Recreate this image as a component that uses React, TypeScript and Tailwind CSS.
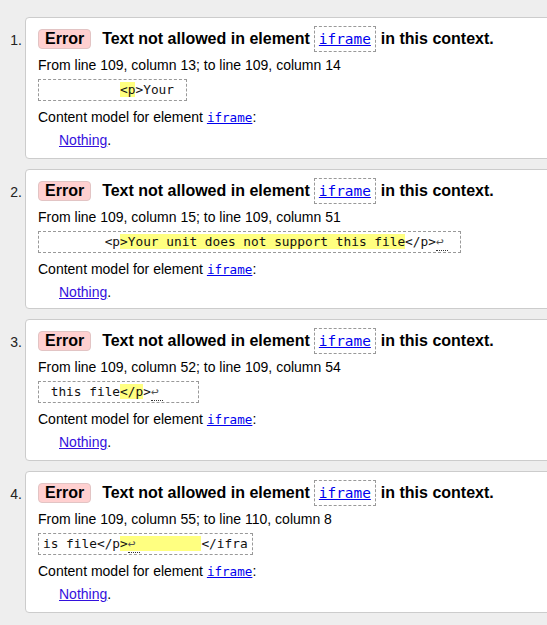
import React from 'react';

type Seg = { text: string; mark?: boolean; ret?: boolean };

interface Item {
  from: string;
  code: Seg[];
  h: string;
}

const items: Item[] = [
  {
    from: 'From line 109, column 13; to line 109, column 14',
    code: [{ text: '          ' }, { text: '<p', mark: true }, { text: '>Your ' }],
    h: 'h-[142px]',
  },
  {
    from: 'From line 109, column 15; to line 109, column 51',
    code: [
      { text: '        <p' },
      { text: '>Your unit does not support this file', mark: true },
      { text: '</p>' },
      { text: '↩', ret: true },
      { text: ' ' },
    ],
    h: 'h-[140px]',
  },
  {
    from: 'From line 109, column 52; to line 109, column 54',
    code: [
      { text: ' this file' },
      { text: '</p', mark: true },
      { text: '>' },
      { text: '↩', ret: true },
      { text: '    ' },
    ],
    h: 'h-[142px]',
  },
  {
    from: 'From line 109, column 55; to line 110, column 8',
    code: [
      { text: 'is file</p' },
      { text: '>', mark: true },
      { text: '↩', mark: true, ret: true },
      { text: '        ', mark: true },
      { text: '</ifra' },
    ],
    h: 'h-[142px]',
  },
];

const mono = { fontFamily: '"DejaVu Sans Mono", "Liberation Mono", monospace' };

function CodeLine({ segs }: { segs: Seg[] }) {
  return (
    <div className="mt-[5px] flex">
      <div
        className="h-[22px] border border-dashed border-[#999] px-[4px] text-[12.8px] leading-[20px] whitespace-pre text-[#111]"
        style={mono}
      >
        {segs.map((s, i) => (
          <span key={i} className={s.mark ? 'bg-[#ffff80]' : ''}>
            {s.ret ? (
              <span className="inline-block w-[12px] leading-[16px] border-b border-dotted border-[#333] text-[#555]">
                {s.text}
              </span>
            ) : (
              s.text
            )}
          </span>
        ))}
      </div>
    </div>
  );
}

export default function App() {
  return (
    <div
      className="w-[547px] h-[625px] overflow-hidden bg-[#eeeeee] pt-[17px] text-black"
      style={{ fontFamily: '"Liberation Sans", Arial, sans-serif' }}
    >
      <ol className="flex flex-col gap-[10px]">
        {items.map((item, idx) => (
          <li key={idx} className="flex">
            <div className="w-[25px] shrink-0 pr-[3px] pt-[15px] text-right text-[14px] leading-[16px] text-[#222]">
              {idx + 1}.
            </div>
            <div className={`w-[540px] shrink-0 ${item.h} rounded-[4px] border border-[#cccccc] bg-white pl-[12px] pt-[8px]`}>
              {/* header */}
              <div className="flex h-[26px] items-center">
                <span className="h-[20px] rounded-[4px] border border-[#e2c4c4] bg-[#ffd0d0] px-[6px] text-[16px] font-bold leading-[18px]">
                  Error
                </span>
                <span className="ml-[11px] text-[16px] font-bold leading-[20px]">
                  Text not allowed in element
                </span>
                <span className="ml-[4px] h-[26px] border border-dashed border-[#999] px-[4px] leading-[24px]">
                  <a className="text-[14.4px] text-[#0000ee] underline" style={mono}>
                    iframe
                  </a>
                </span>
                <span className="ml-[5px] text-[16px] font-bold leading-[20px]">in this context.</span>
              </div>
              <div className="mt-[4px] text-[14px] leading-[18px]">{item.from}</div>
              <CodeLine segs={item.code} />
              <div className="mt-[7px] text-[14px] leading-[18px]">
                Content model for element{' '}
                <a className="text-[12.6px] text-[#0000ee] underline" style={mono}>
                  iframe
                </a>
                :
              </div>
              <div className="mt-[4px] pl-[21px] text-[14px] leading-[18px]">
                <a className="text-[#3311dd] underline">Nothing</a>.
              </div>
            </div>
          </li>
        ))}
      </ol>
    </div>
  );
}
